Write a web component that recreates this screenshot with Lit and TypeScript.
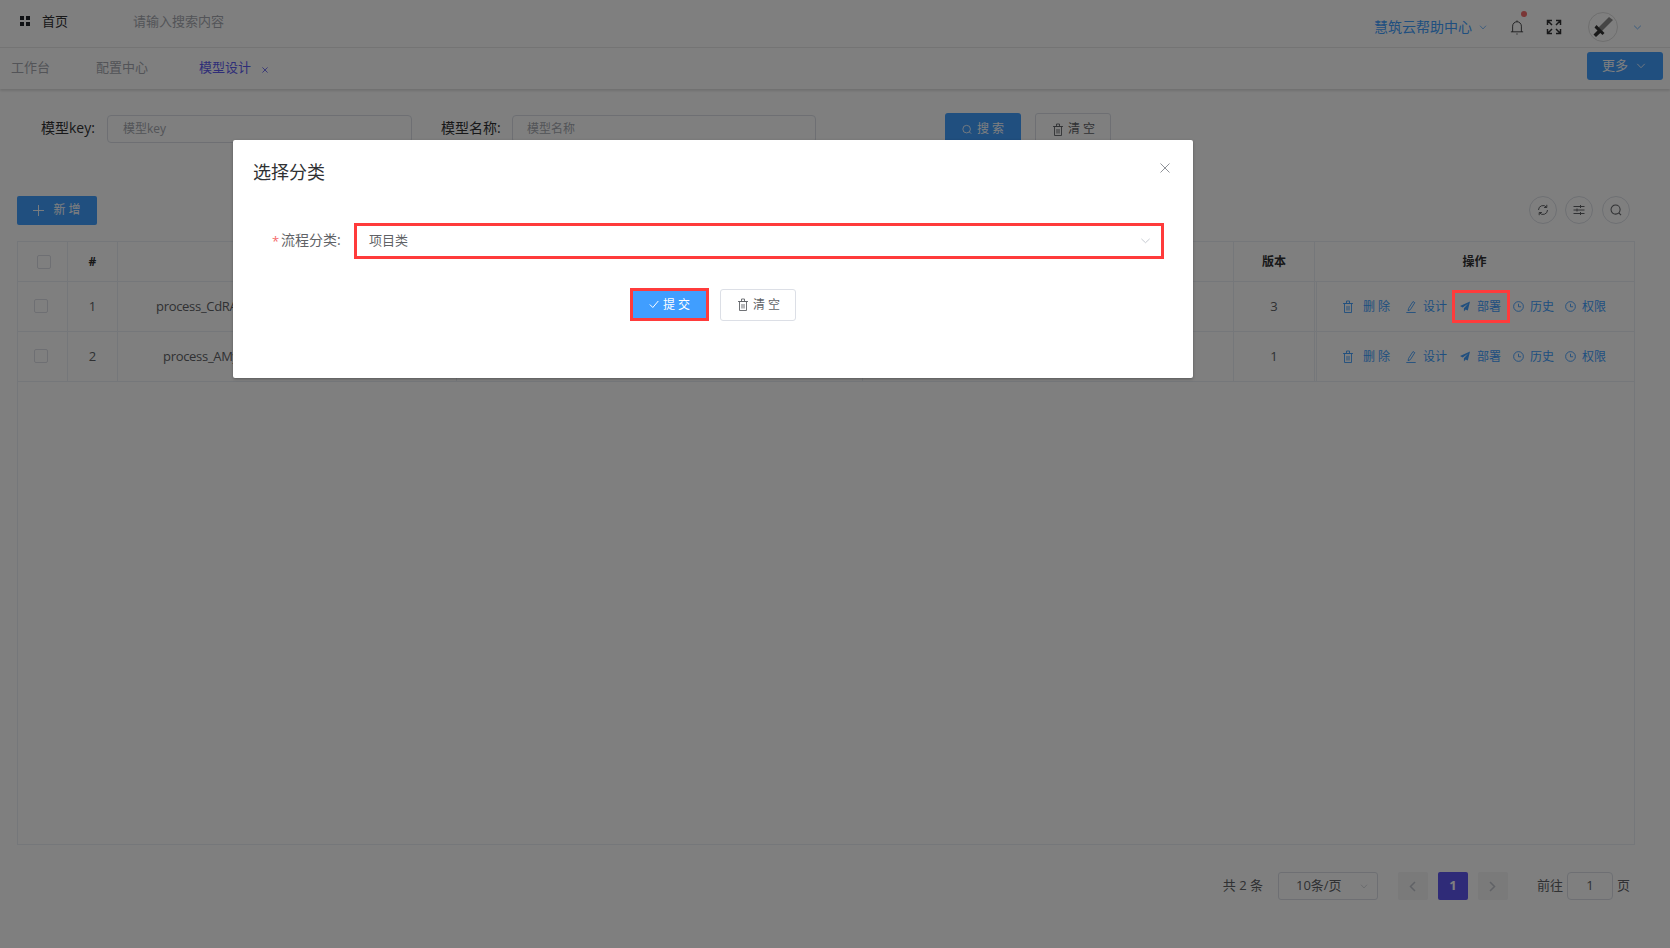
import { LitElement, html, css, svg } from "lit";
import { customElement } from "lit/decorators.js";

const chevron = svg`<path d="M1.5 1 6 5.5 10.5 1" fill="none" stroke="currentColor" stroke-width="1"/>`;
const chev = (cls: string) => html`<svg class=${cls} viewBox="0 0 12 7" preserveAspectRatio="none">${chevron}</svg>`;
const trash = html`<svg class="ic" viewBox="0 0 10 13"><path d="M1.500 3.500h7v9h-7zM0 3.500h10M3.500 3.500V1h3v2.500M4 6v4.500M6 6v4.500" fill="none" stroke="currentColor" stroke-width=".9"/></svg>`;
const pen = html`<svg class="ic" viewBox="0 0 10 13"><path d="M2.500 8.500 7 1.500l1.800 1.200L4.300 9.700l-2.200 1zM.3 12.500h9.400" fill="none" stroke="currentColor" stroke-width=".9"/></svg>`;
const send = html`<svg class="ic" viewBox="0 0 10 13"><path d="M10 1.500 0 6l2.700 1.400L8.300 3.500 3.900 8.300v3.200l1.700-2.100 2.200 1.200z" fill="currentColor"/></svg>`;
const clock = html`<svg class="ic wide" viewBox="0 0 12 12"><circle cx="6" cy="6" r="5.300" fill="none" stroke="currentColor"/><path d="M6 3v3.300h2.800" fill="none" stroke="currentColor"/></svg>`;
const search = html`<svg class="ic" viewBox="0 0 14 14"><circle cx="6.500" cy="6.500" r="5.300" fill="none" stroke="currentColor" stroke-width="1.200"/><path d="m10.300 10.300 2.600 2.600" stroke="currentColor" stroke-width="1.200"/></svg>`;

const rows = [
  { n: 1, name: "process_CdRA", indent: 38, ver: 3 },
  { n: 2, name: "process_AMy", indent: 45, ver: 1 },
];

@customElement("app-root")
export class AppRoot extends LitElement {
  static styles = css`
    :host { display: block; position: relative; width: 100%; height: 948px; overflow: hidden; background: #fff;
      font-family: "Open Sans", "Noto Sans CJK SC", sans-serif; font-size: 13px; line-height: 18px; color: #606266; }
    svg { display: block; flex: none; }
    .ic { width: 10px; height: 13px; }
    .ic.wide { width: 11px; height: 11px; }
    .top { height: 47px; border-bottom: 1px solid #e8e8e8; display: flex; }
    .home { display: flex; align-items: center; height: 42px; color: #303133; }
    .home span { margin-bottom: 1px; }
    .grid { width: 10px; height: 10px; margin: 0 12px 0 20px; }
    .ph { color: #a6a9b0; }
    .home .ph { margin-left: 65px; }
    .right { margin-left: auto; display: flex; align-items: center; height: 54px; color: #303133; }
    .help { color: #409eff; font-size: 14px; }
    .help-ch { width: 8px; height: 5px; margin: 0 23px 0 7px; color: #409eff; }
    .bell { width: 14px; height: 16px; }
    .bellbox { position: relative; }
    .dot { position: absolute; right: -3px; top: -8px; width: 6px; height: 6px; border-radius: 50%; background: #f56c6c; }
    .fs { width: 16px; height: 16px; margin: 0 26px 0 22px; }
    .avatar { width: 30px; height: 30px; border-radius: 50%; border: 1px solid #ddd; box-sizing: border-box; display: flex; align-items: center; justify-content: center; }
    .av-ch { width: 9px; height: 5px; margin: 1px 28px 0 15px; color: #409eff; }
    .tabs { height: 41px; box-sizing: border-box; padding-bottom: 4px; display: flex; align-items: center; box-shadow: 0 2px 2px rgba(0,0,0,.12); color: #a6a9b0; }
    .tab1 { margin-left: 11px; }
    .tab2 { margin-left: 46px; }
    .tab3 { margin-left: 51px; color: #5f5df0; }
    .tabx { margin: 6px 0 0 11px; width: 6px; height: 6px; color: #5f5df0; }
    .more { margin: 4px 7px 0 auto; align-self: flex-start; width: 76px; height: 28px; box-sizing: border-box; padding: 0 2px 2px 0; border-radius: 3px; background: #409eff; color: #fff; display: flex; align-items: center; justify-content: center; gap: 8px; }
    .more svg { width: 10px; height: 6px; margin-top: 2px; }
    .form { display: flex; align-items: flex-start; margin-top: 24px; height: 34px; }
    .lbl { font-size: 14px; color: #303133; margin-top: 6px; white-space: nowrap; }
    .lbl.a { margin-left: 41px; width: 54px; }
    .lbl.b { margin-left: 29px; width: 59px; }
    .inp { margin: 2px 0 0 12px; width: 305px; height: 28px; box-sizing: border-box; border: 1px solid #dcdfe6; border-radius: 4px; padding: 4px 15px; font-size: 12px; }
    .inp.n { width: 304px; padding-left: 14px; }
    .btn { box-sizing: border-box; display: flex; align-items: center; justify-content: center; gap: 5px; font-size: 12px; border-radius: 3px; white-space: nowrap; }
    .btn.pri { background: #409eff; color: #fff; }
    .btn.def { background: #fff; color: #606266; border: 1px solid #dcdfe6; }
    .s1 { margin-left: 129px; width: 76px; height: 34px; padding-bottom: 2px; }
    .s2 { margin-left: 14px; width: 76px; height: 34px; padding: 0 0 2px 2px; }
    .bar { display: flex; align-items: flex-start; justify-content: space-between; margin: 49px 40px 16px 17px; height: 29px; }
    .add { width: 80px; height: 29px; gap: 9px; border-radius: 2px; padding-bottom: 2px; }
    .add svg { width: 11px; height: 11px; margin-top: 2px; }
    .tools { display: flex; gap: 8px; }
    .tool { width: 28px; height: 28px; box-sizing: border-box; border: 1px solid #dcdfe6; border-radius: 50%; display: flex; align-items: center; justify-content: center; color: #606266; }
    .tool:last-child { margin-left: 1px; }
    .tool svg { width: 12px; height: 12px; }
    .table { margin: 0 35px 0 17px; height: 604px; box-sizing: border-box; border: 1px solid #ebeef5; }
    .row { display: grid; grid-template-columns: 50px 50px 339px 406px 371px 81px 1fr; border-bottom: 1px solid #ebeef5; height: 50px; box-sizing: border-box; }
    .row.head { height: 40px; font-weight: 700; font-size: 12px; color: #303133; }
    .cell { display: flex; align-items: center; justify-content: center; border-right: 1px solid #ebeef5; min-width: 0; overflow: hidden; white-space: nowrap; padding-bottom: 1px; }
    .row.head .cell { padding-bottom: 0; }
    .cell:last-child { border-right: 0; }
    .cell.key { justify-content: flex-start; letter-spacing: -.3px; }
    .cell.ops { border-left: 1px solid #ebeef5; margin-left: 1px; padding: 0 2px 0 0; }
    .check { width: 14px; height: 14px; box-sizing: border-box; border: 1px solid #dcdfe6; border-radius: 2px; margin-right: 4px; }
    .head .check { margin-right: -2px; }
    .ops { color: #409eff; font-size: 12px; font-weight: 400; }
    .op { display: flex; align-items: center; gap: 7px; margin-left: 13px; }
    .ops .op:first-child { margin-left: 0; gap: 10px; }
    .ops .op:nth-child(2) { margin-left: 16px; }
    .ops .op:nth-child(n+4) { gap: 6px; }
    .ops .op:nth-child(4) { margin-left: 12px; }
    .ops .op:nth-child(5) { margin-left: 11px; }
    .pager { display: flex; align-items: center; justify-content: flex-end; margin: 27px 40px 0 0; height: 28px; }
    .pager span { margin-bottom: 2px; }
    .sel { box-sizing: border-box; margin-left: 15px; width: 100px; height: 28px; border: 1px solid #dcdfe6; border-radius: 3px; display: flex; align-items: center; padding-left: 17px; }
    .sel svg { width: 8px; height: 5px; margin-left: auto; margin-right: 9px; color: #c0c4cc; }
    .pg { width: 30px; height: 28px; box-sizing: border-box; margin-left: 10px; border-radius: 2px; background: #f4f4f5; display: flex; align-items: center; justify-content: center; font-weight: 700; color: #c0c4cc; }
    .pg svg { width: 7px; height: 11px; }
    .pg.first { margin-left: 20px; }
    .pg.on { background: #5f56f0; color: #fff; padding-bottom: 2px; }
    .goto { margin-left: 29px; }
    .pinp { box-sizing: border-box; width: 46px; height: 28px; margin: 0 4px; padding-bottom: 2px; border: 1px solid #dcdfe6; border-radius: 4px; display: flex; align-items: center; justify-content: center; }
    .overlay { position: absolute; inset: 0; background: rgba(0,0,0,.5); }
    .dialog { box-sizing: border-box; width: 960px; height: 238px; margin: 140px 0 0 233px; background: #fff; border-radius: 2px; box-shadow: 0 1px 3px rgba(0,0,0,.3); padding-top: 20px; }
    .d-head { display: flex; justify-content: space-between; padding: 0 23px 0 20px; height: 24px; }
    .d-title { font-size: 18px; line-height: 24px; color: #303133; }
    .d-x { width: 10px; height: 10px; margin-top: 3px; color: #909399; }
    .d-row { display: flex; align-items: center; margin-top: 39px; height: 36px; padding-left: 39px; }
    .star { color: #f56c6c; width: 6px; margin-right: 3px; flex: none; }
    .d-lbl { color: #606266; width: 60px; white-space: nowrap; font-size: 14px; margin-bottom: 3px; }
    .d-sel { box-sizing: border-box; margin-left: 13px; width: 810px; height: 36px; border: 3px solid #ff3b3b; display: flex; align-items: center; padding: 0 10px 0 12px; }
    .d-sel span { margin-bottom: 3px; }
    .d-sel svg { margin-left: auto; width: 11px; height: 6px; color: #c0c4cc; }
    .d-btns { display: flex; align-items: flex-start; margin: 29px 0 0 397px; }
    .mark { border: 3px solid #ff3b3b; }
    .b-sub { width: 79px; height: 33px; background-clip: padding-box; gap: 4px; border-radius: 0; }
    .b-sub svg { width: 10px; height: 9px; }
    .b-clr { width: 76px; height: 32px; margin: 1px 0 0 11px; padding-left: 2px; }
    .b-clr svg { margin-top: -2px; }
    .redbox { position: absolute; box-sizing: border-box; left: 1452px; top: 290px; width: 58px; height: 33px; border: 3px solid #ff3b3b; }
  `;

  private ops() {
    return html`<div class="cell ops">
      <span class="op">${trash}删 除</span>
      <span class="op">${pen}设计</span>
      <span class="op">${send}部署</span>
      <span class="op">${clock}历史</span>
      <span class="op">${clock}权限</span>
    </div>`;
  }

  render() {
    return html`
      <div class="top">
        <div class="home">
          <svg class="grid" viewBox="0 0 10 10"><path d="M0 0h4v4H0zM6 0h4v4H6zM0 6h4v4H0zM6 6h4v4H6z" fill="#1f2328"/></svg>
          <span>首页</span><span class="ph">请输入搜索内容</span>
        </div>
        <div class="right">
          <span class="help">慧筑云帮助中心</span>${chev("help-ch")}
          <div class="bellbox"><span class="dot"></span>
            <svg class="bell" viewBox="0 0 16 18"><path d="M1 14.500h14M3 14.500V8a5 5 0 0 1 10 0v6.500M8 3V1.500M7.300 17h1.400" fill="none" stroke="currentColor"/></svg></div>
          <svg class="fs" viewBox="0 0 16 16"><path d="M6 1.500H1.500V6M1.500 1.500 6 6M10 1.500h4.500V6M14.500 1.500 10 6M6 14.500H1.500V10M1.500 14.500 6 10M10 14.500h4.500V10M14.500 14.500 10 10" fill="none" stroke="currentColor" stroke-width="1.500"/></svg>
          <div class="avatar"><svg width="20" height="20" viewBox="0 0 20 20"><path d="M16 0l4 3L9 14l-3.500-3.500z" fill="#8a8a8a"/><path d="M3.500 8l8 8-2 2-2.200-2L3 20 .5 17.500 4.500 13.500l-3-3z" fill="#333"/></svg></div>
          ${chev("av-ch")}
        </div>
      </div>
      <div class="tabs">
        <span class="tab1">工作台</span><span class="tab2">配置中心</span><span class="tab3">模型设计</span>
        <svg class="tabx" viewBox="0 0 7 7"><path d="m.5.5 6 6M6.500.5l-6 6" stroke="currentColor" fill="none"/></svg>
        <div class="more"><span>更多</span>${chev("")}</div>
      </div>
      <div class="form">
        <span class="lbl a">模型key:</span><div class="inp ph">模型key</div>
        <span class="lbl b">模型名称:</span><div class="inp n ph">模型名称</div>
        <div class="btn pri s1">${search}搜 索</div>
        <div class="btn def s2">${trash}清 空</div>
      </div>
      <div class="bar">
        <div class="btn pri add"><svg viewBox="0 0 12 12"><path d="M6 0v12M0 6h12" stroke="currentColor" fill="none"/></svg>新 增</div>
        <div class="tools">
          <div class="tool"><svg viewBox="0 0 12 12"><path d="M1.500 6a4.500 4.500 0 0 1 8-2.800M10.500 6a4.500 4.500 0 0 1-8 2.800M9.800.8v2.700H7.100M2.200 11.200V8.500h2.700" fill="none" stroke="currentColor"/></svg></div>
          <div class="tool"><svg viewBox="0 0 12 12"><path d="M.5 2.500h11M.5 6h11M.5 9.500h11M7.500 1v3M4 4.500v3M7.500 8v3" fill="none" stroke="currentColor"/></svg></div>
          <div class="tool">${search}</div>
        </div>
      </div>
      <div class="table">
        <div class="row head">
          <div class="cell"><span class="check"></span></div><div class="cell">#</div>
          <div class="cell"></div><div class="cell"></div><div class="cell"></div>
          <div class="cell">版本</div><div class="cell">操作</div>
        </div>
        ${rows.map((r) => html`<div class="row">
          <div class="cell"><span class="check"></span></div><div class="cell">${r.n}</div>
          <div class="cell key" style="padding-left:${r.indent}px">${r.name}</div>
          <div class="cell"></div><div class="cell"></div>
          <div class="cell">${r.ver}</div>${this.ops()}
        </div>`)}
      </div>
      <div class="pager">
        <span>共 2 条</span>
        <div class="sel"><span>10条/页</span>${chev("")}</div>
        <div class="pg first"><svg viewBox="0 0 7 11"><path d="M6 1 1.500 5.500 6 10" fill="none" stroke="currentColor" stroke-width="1.500"/></svg></div>
        <div class="pg on">1</div>
        <div class="pg"><svg viewBox="0 0 7 11"><path d="M1 1l4.500 4.500L1 10" fill="none" stroke="currentColor" stroke-width="1.500"/></svg></div>
        <span class="goto">前往</span><div class="pinp">1</div><span>页</span>
      </div>
      <div class="overlay">
        <div class="dialog">
          <div class="d-head">
            <span class="d-title">选择分类</span>
            <svg class="d-x" viewBox="0 0 10 10"><path d="m.5.5 9 9M9.500.5l-9 9" stroke="currentColor" fill="none"/></svg>
          </div>
          <div class="d-row">
            <span class="star">*</span><span class="d-lbl">流程分类:</span>
            <div class="d-sel"><span>项目类</span>${chev("")}</div>
          </div>
          <div class="d-btns">
            <div class="btn pri mark b-sub"><svg viewBox="0 0 10 9"><path d="m.8 4.500 3 3L9.300 1" fill="none" stroke="currentColor"/></svg>提 交</div>
            <div class="btn def b-clr">${trash}清 空</div>
          </div>
        </div>
      </div>
      <div class="redbox"></div>
    `;
  }
}
